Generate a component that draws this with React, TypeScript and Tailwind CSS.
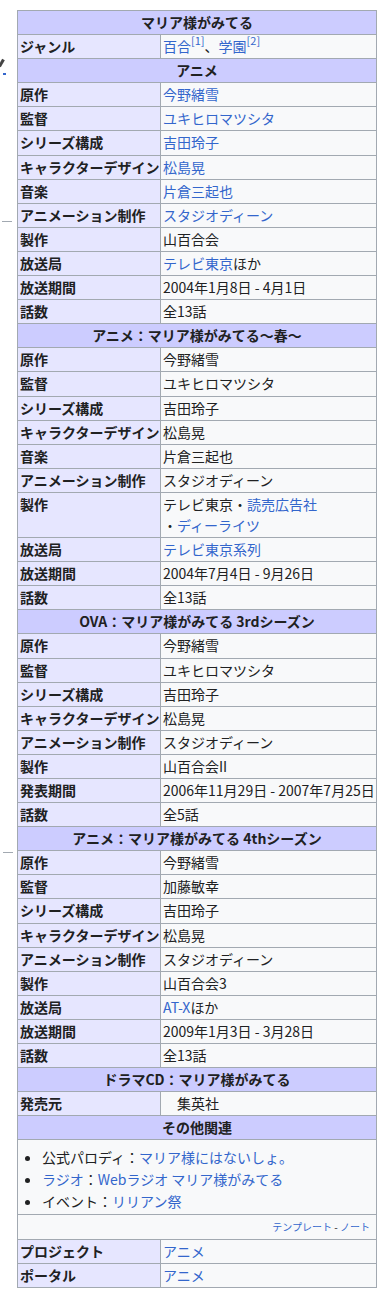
import React from 'react';

type Cell = React.ReactNode;

const L = ({ children }: { children: React.ReactNode }) => (
  <span className="text-[#3366cc]">{children}</span>
);

const Sup = ({ n }: { n: number }) => (
  <sup className="text-[#3366cc] text-[11px] leading-none relative -top-[1px] align-super">[{n}]</sup>
);

type Section = { title: string; rows: [string, Cell][] };

const sections: Section[] = [
  {
    title: 'アニメ',
    rows: [
      ['原作', <L>今野緒雪</L>],
      ['監督', <L>ユキヒロマツシタ</L>],
      ['シリーズ構成', <L>吉田玲子</L>],
      ['キャラクターデザイン', <L>松島晃</L>],
      ['音楽', <L>片倉三起也</L>],
      ['アニメーション制作', <L>スタジオディーン</L>],
      ['製作', '山百合会'],
      ['放送局', <><L>テレビ東京</L>ほか</>],
      ['放送期間', '2004年1月8日 - 4月1日'],
      ['話数', '全13話'],
    ],
  },
  {
    title: 'アニメ：マリア様がみてる〜春〜',
    rows: [
      ['原作', '今野緒雪'],
      ['監督', 'ユキヒロマツシタ'],
      ['シリーズ構成', '吉田玲子'],
      ['キャラクターデザイン', '松島晃'],
      ['音楽', '片倉三起也'],
      ['アニメーション制作', 'スタジオディーン'],
      [
        '製作',
        <>
          テレビ東京・<L>読売広告社</L>
          <br />・<L>ディーライツ</L>
        </>,
      ],
      ['放送局', <L>テレビ東京系列</L>],
      ['放送期間', '2004年7月4日 - 9月26日'],
      ['話数', '全13話'],
    ],
  },
  {
    title: 'OVA：マリア様がみてる 3rdシーズン',
    rows: [
      ['原作', '今野緒雪'],
      ['監督', 'ユキヒロマツシタ'],
      ['シリーズ構成', '吉田玲子'],
      ['キャラクターデザイン', '松島晃'],
      ['アニメーション制作', 'スタジオディーン'],
      ['製作', '山百合会II'],
      ['発表期間', '2006年11月29日 - 2007年7月25日'],
      ['話数', '全5話'],
    ],
  },
  {
    title: 'アニメ：マリア様がみてる 4thシーズン',
    rows: [
      ['原作', '今野緒雪'],
      ['監督', '加藤敏幸'],
      ['シリーズ構成', '吉田玲子'],
      ['キャラクターデザイン', '松島晃'],
      ['アニメーション制作', 'スタジオディーン'],
      ['製作', '山百合会3'],
      ['放送局', <><L>AT-X</L>ほか</>],
      ['放送期間', '2009年1月3日 - 3月28日'],
      ['話数', '全13話'],
    ],
  },
];

const th = 'border border-[#a2a9b1] bg-[#ccccff] text-center font-bold px-[2px] py-px';
const lab = 'border border-[#a2a9b1] bg-[#e6e6ff] font-bold text-left align-top px-[2px] py-px whitespace-nowrap';
const dat = 'border border-[#a2a9b1] bg-[#f8f9fa] align-top px-[2px] py-px whitespace-nowrap';

function Header({ title }: { title: string }) {
  return (
    <tr>
      <th colSpan={2} className={th}>
        {title}
      </th>
    </tr>
  );
}

function Row({ label, value }: { label: string; value: Cell }) {
  return (
    <tr>
      <th className={lab}>{label}</th>
      <td className={dat}>{value}</td>
    </tr>
  );
}

export default function App() {
  return (
    <div
      className="relative w-[383px] h-[1304px] bg-white text-[#202122] text-[14px] leading-[21.1px] overflow-hidden"
      style={{ fontFamily: '"Noto Sans CJK JP", "Noto Sans", sans-serif' }}
    >
      <span className="absolute left-0 top-[59px] w-[3px] h-[8px] bg-[#444] rotate-[30deg]" />
      <span className="absolute left-[3px] top-[73px] w-[3px] h-[2px] bg-[#3366cc]" />
      <span className="absolute left-[2px] top-[221px] w-[10px] h-px bg-[#a2a9b1]" />
      <span className="absolute left-[3px] top-[852px] w-[10px] h-px bg-[#a2a9b1]" />
      <div className="pt-[10px] pl-[17px]">
        <table className="w-[360px] table-fixed border-collapse border border-[#a2a9b1]">
          <colgroup>
            <col className="w-[143px]" />
            <col />
          </colgroup>
          <tbody>
            <Header title="マリア様がみてる" />
            <Row
              label="ジャンル"
              value={
                <>
                  <L>百合</L>
                  <Sup n={1} />、<L>学園</L>
                  <Sup n={2} />
                </>
              }
            />
            {sections.map((s) => (
              <React.Fragment key={s.title}>
                <Header title={s.title} />
                {s.rows.map(([l, v], i) => (
                  <Row key={i} label={l} value={v} />
                ))}
              </React.Fragment>
            ))}
            <Header title="ドラマCD：マリア様がみてる" />
            <Row label="発売元" value={<span className="pl-[14px]">集英社</span>} />
            <Header title="その他関連" />
            <tr>
              <td colSpan={2} className="border border-[#a2a9b1] bg-[#f8f9fa] pt-[6px] pb-[2px] px-[2px]">
                <ul className="pl-[22px] list-disc leading-[22px]">
                  <li>
                    公式パロディ：<L>マリア様にはないしょ。</L>
                  </li>
                  <li>
                    <L>ラジオ</L>：<L>Webラジオ マリア様がみてる</L>
                  </li>
                  <li>
                    イベント：<L>リリアン祭</L>
                  </li>
                </ul>
              </td>
            </tr>
            <tr>
              <td colSpan={2} className="border border-[#a2a9b1] bg-[#f8f9fa] text-right px-[6px] py-px text-[10px]">
                <L>テンプレート</L> - <L>ノート</L>
              </td>
            </tr>
            <Row label="プロジェクト" value={<L>アニメ</L>} />
            <Row label="ポータル" value={<L>アニメ</L>} />
          </tbody>
        </table>
      </div>
    </div>
  );
}
